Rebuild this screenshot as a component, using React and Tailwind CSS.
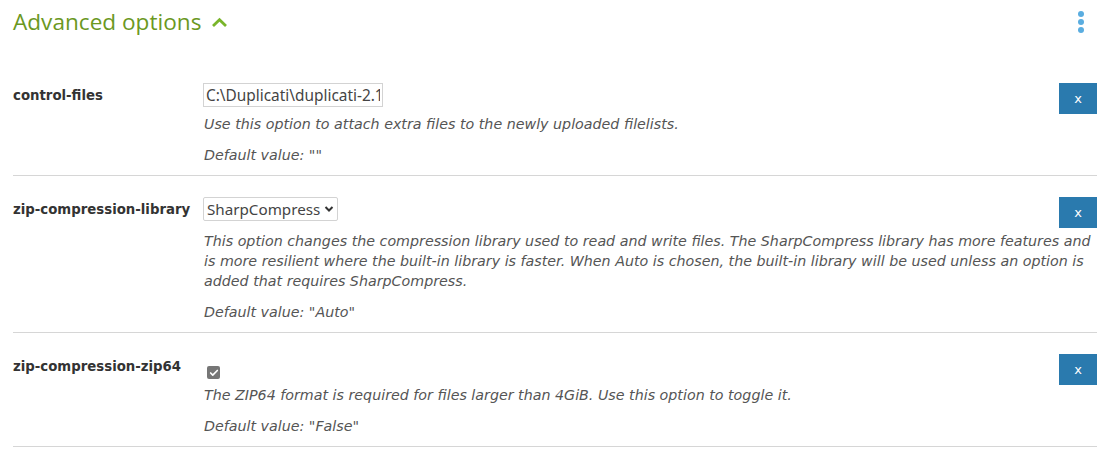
import { Check } from 'lucide-react';

const uiFont = { fontFamily: '"Noto Sans", "Open Sans", sans-serif' };
const textFont = { fontFamily: '"DejaVu Sans", Verdana, sans-serif' };

const RemoveButton = () => (
  <button
    className="w-[38px] h-[31px] bg-[#2a7aae] text-white text-[13px] flex items-center justify-center shrink-0"
    style={textFont}
  >
    x
  </button>
);

const OptionRow = ({ name, control, description, defaultValue, gap = 0 }) => (
  <div className="flex border-b border-[#d6d6d6] pt-[21px] pb-[10px]">
    <div className="w-[190px] shrink-0 text-[13.3px] font-bold text-[#333] leading-[24px] pt-[1px]" style={textFont}>
      {name}
    </div>
    <div className="flex-1 min-w-0" style={textFont}>
      <div className="flex items-start justify-between h-[31px]">
        {control}
        <RemoveButton />
      </div>
      <p className="text-[14.25px] italic text-[#555] leading-[20px] pl-[1px]" style={{ marginTop: gap }}>
        {description}
      </p>
      <p className="text-[14.25px] italic text-[#555] leading-[20px] mt-[11px] pl-[1px]">Default value: {defaultValue}</p>
    </div>
  </div>
);

export default function App() {
  return (
    <div className="w-[1113px] h-[453px] bg-white pl-[13px] pr-[16px] overflow-hidden">
      <div className="flex items-center justify-between h-[44px]">
        <div className="flex items-center gap-[10px]">
          <h2 className="text-[22.6px] text-[#6b981f] font-normal leading-none" style={{ fontFamily: '"Open Sans", sans-serif' }}>
            Advanced options
          </h2>
          <svg width="17" height="11" viewBox="0 0 17 11" className="mt-[1px]">
            <path d="M2 9 L8.5 2.8 L15 9" fill="none" stroke="#79b52a" strokeWidth="2.8" />
          </svg>
        </div>
        <div className="flex flex-col gap-[2px] pr-[13px]">
          <span className="w-[6px] h-[6px] rounded-full bg-[#5aade0]" />
          <span className="w-[6px] h-[6px] rounded-full bg-[#5aade0]" />
          <span className="w-[6px] h-[6px] rounded-full bg-[#5aade0]" />
        </div>
      </div>
      <div className="h-[18px]" />
      <OptionRow
        name="control-files"
        control={
          <input
            type="text"
            readOnly
            value="C:\Duplicati\duplicati-2.1.0.5_stable"
            className="w-[180px] h-[24px] border border-[#d3d3d3] px-[2px] text-[15.4px] text-[#444] outline-none"
            style={uiFont}
          />
        }
        description="Use this option to attach extra files to the newly uploaded filelists."
        defaultValue={'""'}
      />
      <OptionRow
        name="zip-compression-library"
        gap={3}
        control={
          <div
            className="w-[135px] h-[24px] border border-[#d3d3d3] rounded-[2px] flex items-center justify-between pl-[3px] pr-[3px] text-[15.2px] text-[#444]"
            style={uiFont}
          >
            <span>SharpCompress</span>
            <svg width="10" height="8" viewBox="0 0 10 8">
              <path d="M1.5 2 L5 5.5 L8.5 2" fill="none" stroke="#333" strokeWidth="2" />
            </svg>
          </div>
        }
        description="This option changes the compression library used to read and write files. The SharpCompress library has more features and is more resilient where the built-in library is faster. When Auto is chosen, the built-in library will be used unless an option is added that requires SharpCompress."
        defaultValue={'"Auto"'}
      />
      <OptionRow
        name="zip-compression-zip64"
        control={
          <div className="pl-[4px] pt-[12px]">
            <div className="w-[13px] h-[13px] rounded-[2px] bg-[#767676] flex items-center justify-center">
              <Check className="w-[10px] h-[10px] text-white" strokeWidth={4} />
            </div>
          </div>
        }
        description="The ZIP64 format is required for files larger than 4GiB. Use this option to toggle it."
        defaultValue={'"False"'}
      />
    </div>
  );
}
